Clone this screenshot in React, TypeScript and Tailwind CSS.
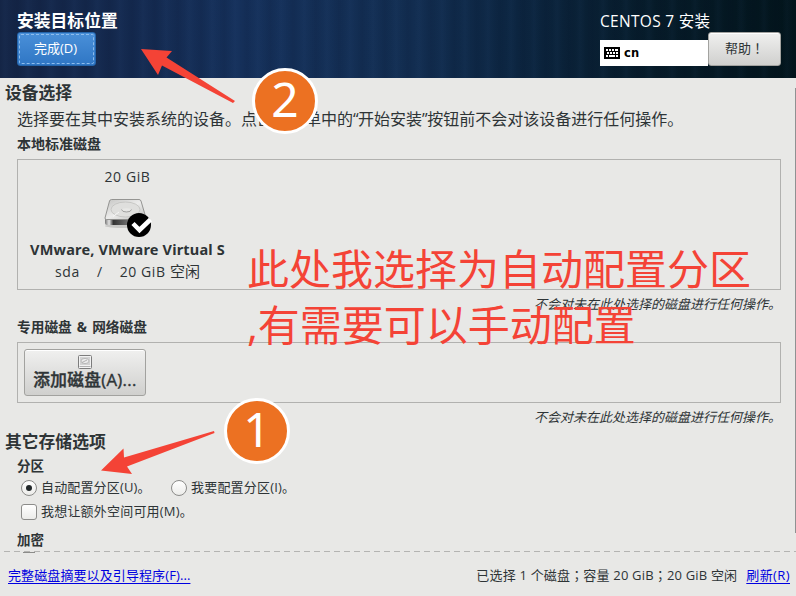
import React from "react";

const dashes = "bg-[repeating-linear-gradient(90deg,transparent_0px,transparent_4px,#b4b4b2_4px,#b4b4b2_10px)]";

function DiskIcon() {
  return (
    <svg width="50" height="42" viewBox="0 0 50 42" className="block">
      <defs>
        <linearGradient id="top" x1="0" y1="0" x2="1" y2="1">
          <stop offset="0" stopColor="#c4c4c2" />
          <stop offset="0.5" stopColor="#ececeb" />
          <stop offset="1" stopColor="#bdbdbb" />
        </linearGradient>
        <linearGradient id="front" x1="0" y1="0" x2="1" y2="0">
          <stop offset="0" stopColor="#777" />
          <stop offset="0.1" stopColor="#e4e4e4" />
          <stop offset="0.2" stopColor="#333" />
          <stop offset="0.8" stopColor="#999" />
          <stop offset="1" stopColor="#444" />
        </linearGradient>
      </defs>
      <ellipse cx="22" cy="28" rx="20" ry="2" fill="#c8c8c6" />
      <path d="M2 21 L40 21 L43.500 20 V27 H4 Q2 27 2 25 Z" fill="url(#front)" />
      <path d="M8.500 1.500 H36 Q37.500 1.500 38 3 L43 20 Q43 21.500 42 21.500 H3.500 Q2 21.500 2 20 L6.500 3 Q7 1.500 8.500 1.500 Z" fill="url(#top)" stroke="#8b8b89" strokeWidth="0.9" />
      <ellipse cx="22.500" cy="11.500" rx="14.500" ry="7.500" fill="#dfdfdd" stroke="#c0c0be" strokeWidth="0.8" />
      <path d="M18.500 11.500 Q19 14 23.500 14 Q28 14 28.500 11.500" fill="none" stroke="#9a9a98" strokeWidth="0.9" />
      <ellipse cx="23.500" cy="11.500" rx="4" ry="1.300" fill="#e8e8e6" />
      <path d="M16 14 L10 18.500" stroke="#f7f7f7" strokeWidth="1" />
      <circle cx="36" cy="27" r="12" fill="#000" />
      <path d="M30 25.500 L36.500 32 L47.500 21.500" fill="none" stroke="#fff" strokeWidth="4.500" />
    </svg>
  );
}

function SmallDiskIcon() {
  return (
    <svg width="14" height="14" viewBox="0 0 14 14" className="block">
      <rect x="0.5" y="0.5" width="13" height="13" rx="1" fill="#f2f2f2" stroke="#7c7c7c" />
      <rect x="2" y="2" width="10" height="8" fill="#d2d2d2" />
      <ellipse cx="7" cy="6" rx="4" ry="2.600" fill="#ececec" stroke="#b0b0b0" strokeWidth="0.8" />
      <path d="M4 7.500 L9 5 M1.500 11.500 H12.500" stroke="#aaa" strokeWidth="0.9" />
    </svg>
  );
}

function KeyboardIcon() {
  return (
    <svg width="16" height="12" viewBox="0 0 16 12" className="block" shapeRendering="crispEdges">
      <rect width="16" height="12" rx="1" fill="#000" />
      <path d="M2 2h2v2H2zM5 2h2v2H5zM8 2h2v2H8zM11 2h3v2h-3zM3 5h2v2H3zM6 5h2v2H6zM9 5h2v2H9zM12 5h2v2h-2zM2 8h2v2H2zM5 8h6v2H5zM12 8h2v2h-2z" fill="#fff" />
    </svg>
  );
}

function Radio({ on }: { on?: boolean }) {
  return (
    <span className="flex size-4 shrink-0 items-center justify-center rounded-full border border-[#8c8c8a] bg-gradient-to-b from-white to-[#ececea]">
      {on && <span className="size-1.5 rounded-full bg-[#22282a]" />}
    </span>
  );
}

function Badge({ children, className }: { children: string; className: string }) {
  return (
    <div className={"absolute flex size-[66px] items-center justify-center rounded-full border-[3px] border-white bg-[#ec7122] font-['Noto_Sans'] text-[48px] leading-none text-white " + className}>
      <span className="-mt-[4px] block">{children}</span>
    </div>
  );
}

function Mid({ children }: { children: string }) {
  return <span className="font-['Noto_Sans_CJK_TC']">{children}</span>;
}

const button = "border border-[#a2a29f] rounded-[3px] bg-gradient-to-b from-[#f0f0ef] to-[#d0d0ce] shadow-[inset_0_1px_0_#fff]";

export default function App() {
  return (
    <div className="relative flex h-[596px] w-[796px] flex-col overflow-hidden whitespace-nowrap bg-[#e8e8e6] font-['Open_Sans','Noto_Sans_CJK_SC',sans-serif] text-[13px] text-[#2e3436]">
      <header className="flex h-[78px] shrink-0 justify-between bg-[repeating-linear-gradient(90deg,rgba(90,140,210,0)_0px,rgba(90,140,210,0.04)_5px,rgba(90,140,210,0)_11px,rgba(0,8,30,0.08)_17px,rgba(90,140,210,0)_23px),linear-gradient(90deg,#142546_0%,#142a50_18%,#15305a_30%,#122d50_52%,#0c2540_65%,#061b29_82%,#02141b_100%)] pl-[17px] pr-[15px] text-white">
        <div className="flex flex-col items-start pt-[10px]">
          <h1 className="h-[22px] text-[16.800px] font-bold leading-[22px]">安装目标位置</h1>
          <button className="h-[34px] w-[79px] rounded-[3px] border border-[#2464aa] bg-gradient-to-b from-[#4a90d9] to-[#2f76c4] p-px">
            <span className="flex h-full items-center justify-center rounded-[2px] border border-dashed border-[#8dbcec] pb-px pr-0.5">完成(D)</span>
          </button>
        </div>
        <div className="flex w-[181px] flex-col pt-[10px]">
          <div className="h-[22px] text-[15.500px] leading-[22px] tracking-[0.3px]">CENTOS 7 安装</div>
          <div className="flex items-end">
            <div className="flex h-[26px] w-[108px] items-center gap-1 bg-white pl-1 text-black">
              <KeyboardIcon />
              <span className="pt-px font-['DejaVu_Sans'] text-[11.500px] font-bold tracking-[0.3px]">cn</span>
            </div>
            <button className={"h-[34px] w-[73px] pb-0.5 text-[#2e3436] " + button}>帮助<Mid>！</Mid></button>
          </div>
        </div>
      </header>

      <main className="flex h-[473px] shrink-0 justify-between overflow-hidden">
        <div className="flex w-[781px] flex-col">
          <h2 className="mt-[4px] h-[22px] pl-[5px] text-[16.800px] font-bold leading-[22px]">设备选择</h2>
          <p className="mt-[4px] h-[22px] pl-[17px] text-[16px] leading-[22px]">
            选择要在其中安装系统的设备。点击主菜单中的<span className="tracking-[-0.5px]">“</span>开始安装<span className="tracking-[-0.5px]">”</span>按钮前不会对该设备进行任何操作。
          </p>
          <h3 className="mt-[4px] h-[20px] pl-[17px] text-[14px] font-bold leading-[20px]">本地标准磁盘</h3>
          <section className="ml-[17px] mt-[5px] h-[131px] border border-[#b1b1af]">
            <div className="flex w-[219px] flex-col items-center text-[14px]">
              <span className="mt-[7px] h-[20px] leading-[20px] tracking-[0.6px]">20 GiB</span>
              <div className="mt-[11px] h-[41px] pl-px"><DiskIcon /></div>
              <b className="h-[20px] font-['Noto_Sans'] text-[14.500px] leading-[20px] tracking-[0.18px]">VMware, VMware Virtual S</b>
              <div className="mt-[3px] flex h-[20px] gap-[17px] leading-[20px] tracking-[0.6px]">
                <span>sda</span><span>/</span><span>20 GiB <span className="text-[15px] leading-none tracking-normal">空闲</span></span>
              </div>
            </div>
          </section>
          <p className="mt-[4px] h-[20px] text-right text-[13px] italic leading-[20px]">不会对未在此处选择的磁盘进行任何操作。</p>
          <h3 className="mt-[3px] h-[20px] pl-[17px] text-[13.700px] font-bold leading-[20px]">专用磁盘<span className="px-[1.5px]"> &amp; </span>网络磁盘</h3>
          <section className="ml-[17px] mt-[5px] h-[61px] border border-[#b1b1af] p-[6px]">
            <button className={"flex h-[47px] w-[122px] flex-col items-center pt-[5px] " + button}>
              <SmallDiskIcon />
              <span className="h-[22px] text-[16.700px] font-medium leading-[22px] tracking-[0.3px] [-webkit-text-stroke:0.4px_#2e3436]">添加磁盘(A)...</span>
            </button>
          </section>
          <p className="mt-[4px] h-[20px] text-right text-[13px] italic leading-[20px]">不会对未在此处选择的磁盘进行任何操作。</p>
          <h2 className="mt-[4px] h-[22px] pl-[5px] text-[16.800px] font-bold leading-[22px]">其它存储选项</h2>
          <h3 className="mt-[3px] h-[20px] pl-[17px] text-[13.500px] font-bold leading-[20px]">分区</h3>
          <div className="mt-[2px] flex h-[20px] items-center pl-[21px]">
            <label className="flex w-[150px] items-center gap-1"><Radio on /><span className="tracking-[0.15px]">自动配置分区(U)。</span></label>
            <label className="flex items-center gap-1"><Radio /><span className="tracking-[0.2px]">我要配置分区(I)。</span></label>
          </div>
          <label className="mt-[4px] flex h-[20px] items-center gap-1 pl-[21px]">
            <span className="size-4 rounded-[3px] border border-[#8c8c8a] bg-gradient-to-b from-white to-[#ececea]" />
            <span className="tracking-[0.2px]">我想让额外空间可用(M)。</span>
          </label>
          <h3 className="mt-[8px] h-[20px] pl-[17px] text-[13.500px] font-bold leading-[20px]">加密</h3>
        </div>
        <div className="mt-[10px] h-[445px] w-px bg-[#8f9192]" />
      </main>

      <footer className="flex h-[45px] flex-col">
        <div className={"h-px shrink-0 " + dashes} />
        <div className="ml-[23px] h-px w-[12px] shrink-0 bg-[#8c8c8a]" />
        <div className="flex items-center justify-between pl-2 pr-[6px] pt-[12px] leading-[20px]">
          <a className="text-[#0000e0] tracking-[0.1px] underline underline-offset-[3px]">完整磁盘摘要以及引导程序(F)...</a>
          <div className="flex gap-[9px]">
            <span className="tracking-[0.18px]">已选择 1 个磁盘<Mid>；</Mid>容量 20 GiB<Mid>；</Mid>20 GiB 空闲</span>
            <a className="text-[#0000e0] tracking-[0.4px] underline underline-offset-[3px]">刷新(R)</a>
          </div>
        </div>
      </footer>

      <div className="absolute left-[247px] top-[241px] text-[42px] leading-[56px] text-[#f44336]">
        <div>此处我选择为自动配置分区</div>
        <div>,有需要可以手动配置</div>
      </div>
      <svg className="pointer-events-none absolute left-0 top-0" width="796" height="596" viewBox="0 0 796 596" fill="#f44336">
        <path d="M141 49 L172 51 L166.500 57.500 L235 101 L233 103 L162 65.500 L158 75 Z" />
        <path d="M101 470.500 L123.500 448.500 L124 457.500 L214 431 L214.500 433 L127 466.500 L132 474 Z" />
      </svg>
      <Badge className="left-[252px] top-[68px]">2</Badge>
      <Badge className="left-[224px] top-[398px]">1</Badge>
    </div>
  );
}
